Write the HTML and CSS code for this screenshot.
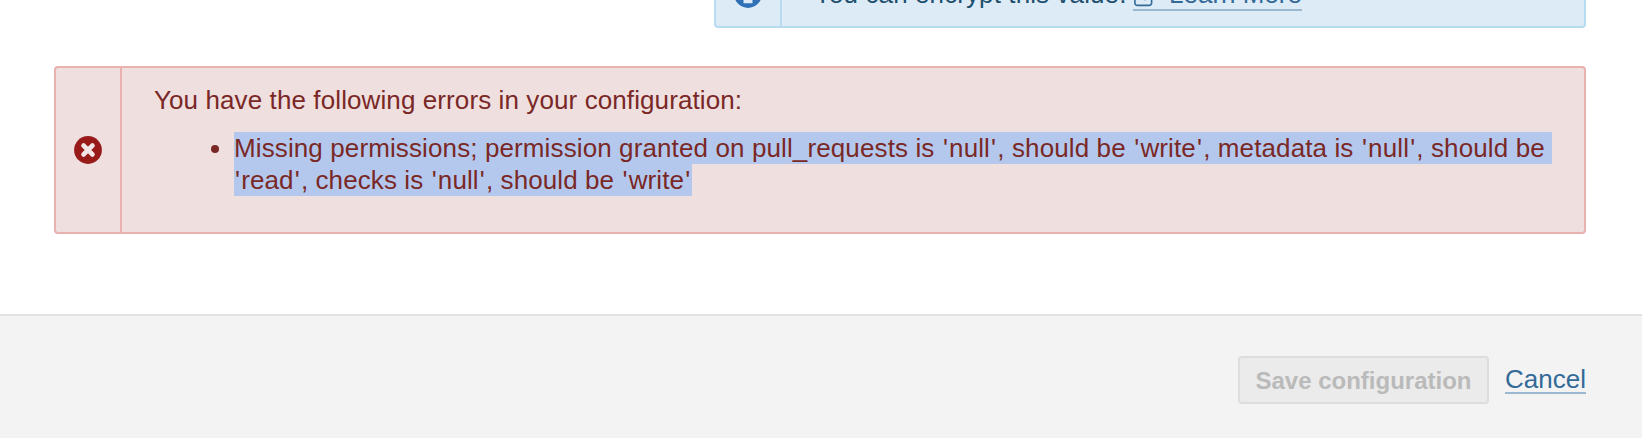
FILE: index.html
```html
<!DOCTYPE html>
<html lang="en">
<head>
<meta charset="utf-8">
<title>Configuration</title>
<link rel="stylesheet" href="styles.css">
</head>
<body>
<main class="content">
  <div class="field-row">
    <section class="alert alert-info">
      <div class="alert-icon">
        <svg width="28" height="28" viewBox="0 0 28 28"><circle cx="14" cy="14" r="13.900" fill="#2f70b7"/><path d="M11.500 4.500h5v4h-5zM9.500 11h7v9h2v3.200h-9V20h2v-5.500h-2z" fill="#ddebf7"/></svg>
      </div>
      <div class="alert-body">
        <p class="info-text"><span class="info-label">You can encrypt this value.</span> <a class="link learn-link" href="#"><svg class="lock" width="21" height="27" viewBox="0 0 21 27"><path d="M6 12V7a4.500 4.500 0 0 1 9 0v5M4.500 12h12.500a2.500 2.500 0 0 1 2.500 2.500v9a2.500 2.500 0 0 1-2.500 2.500h-12.500A2.500 2.500 0 0 1 2 23.500v-9A2.500 2.500 0 0 1 4.500 12zM12.500 17v3.500" fill="none" stroke="#336a98" stroke-width="1.700"/></svg><span class="learn-text">Learn More</span></a></p>
      </div>
    </section>
  </div>
  <section class="alert alert-error">
    <div class="alert-icon">
      <svg width="28" height="28" viewBox="0 0 28 28"><circle cx="14" cy="14" r="13.900" fill="#981b1a"/><path d="M9.600 9.600l8.800 8.800M18.400 9.600l-8.800 8.800" stroke="#f3e6e6" stroke-width="4.800" stroke-linecap="round"/></svg>
    </div>
    <div class="alert-body">
      <p class="error-title">You have the following errors in your configuration:</p>
      <ul class="error-list">
        <li><span class="selected line-one">Missing permissions; permission granted on pull_requests is <i>'</i>null<i>'</i>, should be <i>'</i>write<i>'</i>, metadata is <i>'</i>null<i>'</i>, should be </span><br><span class="selected line-two"><i>'</i>read<i>'</i>, checks is <i>'</i>null<i>'</i>, should be <i>'</i>write<i>'</i></span></li>
      </ul>
    </div>
  </section>
</main>
<footer class="actions">
  <button class="save" disabled>Save configuration</button>
  <a class="link cancel" href="#">Cancel</a>
</footer>
</body>
</html>
```
FILE: styles.css
```css
* { box-sizing: border-box; }
body {
  margin: 0;
  height: 438px;
  overflow: hidden;
  display: flex;
  flex-direction: column;
  background: #fff;
  font: 26px/32px "Liberation Sans", Arial, sans-serif;
}
p, ul { margin: 0; }
.content { height: 314px; padding: 0 56px 0 54px; flex: none; }
.field-row {
  height: 28px;
  margin-bottom: 38px;
  display: flex;
  align-items: flex-end;
  justify-content: flex-end;
}
.alert {
  display: flex;
  border: 2px solid;
  border-radius: 4px;
}
.alert-icon {
  flex: none;
  width: 66px;
  display: flex;
  align-items: center;
  justify-content: center;
  border-right: 2px solid;
  border-color: inherit;
}
.alert-icon svg { display: block; }
.alert-body { flex: 1; padding: 16px 32px; white-space: nowrap; letter-spacing: 0.1px; }
.alert-info {
  width: 872px;
  height: 68px;
  background: #ddebf7;
  border-color: #b7dcf1;
  color: #1f506f;
}
.alert-error {
  width: 1532px;
  height: 168px;
  background: #efdfdf;
  border-color: #ebb1b1;
  color: #7a2826;
}
.info-text { display: flex; }
.info-label { width: 312px; }
.link { color: #336a98; text-decoration: none; border-bottom: 2px solid #9cb7d0; }
.learn-link { display: flex; height: 33px; width: 169px; margin-left: 7px; }
.lock { margin-top: 2px; }
.learn-text { margin-left: 16px; letter-spacing: 0; }
.error-title { margin-bottom: 16px; }
.error-list { padding-left: 80px; list-style: none; }
.error-list li { position: relative; height: 64px; }
.error-list li::before {
  content: "";
  position: absolute;
  left: -23px;
  top: 13px;
  width: 8px;
  height: 8px;
  border-radius: 50%;
  background: #7a2826;
}
.selected { display: inline-block; height: 32px; background: #b4c8ee; vertical-align: top; white-space: pre; letter-spacing: 0.115px; }
.selected i { margin: 0 1.1px; font-style: normal; }
.line-one { width: 1318px; }
.line-two { width: 458px; letter-spacing: 0.09px; }
.actions {
  flex: 1;
  display: flex;
  align-items: flex-start;
  justify-content: flex-end;
  gap: 16px;
  padding: 40px 56px 0 0;
  border-top: 2px solid #e3e3e3;
  background: #f3f3f3;
}
.save {
  width: 251px;
  height: 48px;
  padding: 1px 0 0;
  border: 2px solid #dddddd;
  border-radius: 4px;
  background: #ebebeb;
  color: #bababa;
  font: bold 24px/43px "Liberation Sans", Arial, sans-serif;
  white-space: nowrap;
}
.cancel { width: 81px; height: 31px; line-height: 32px; margin-top: 7px; }
```
